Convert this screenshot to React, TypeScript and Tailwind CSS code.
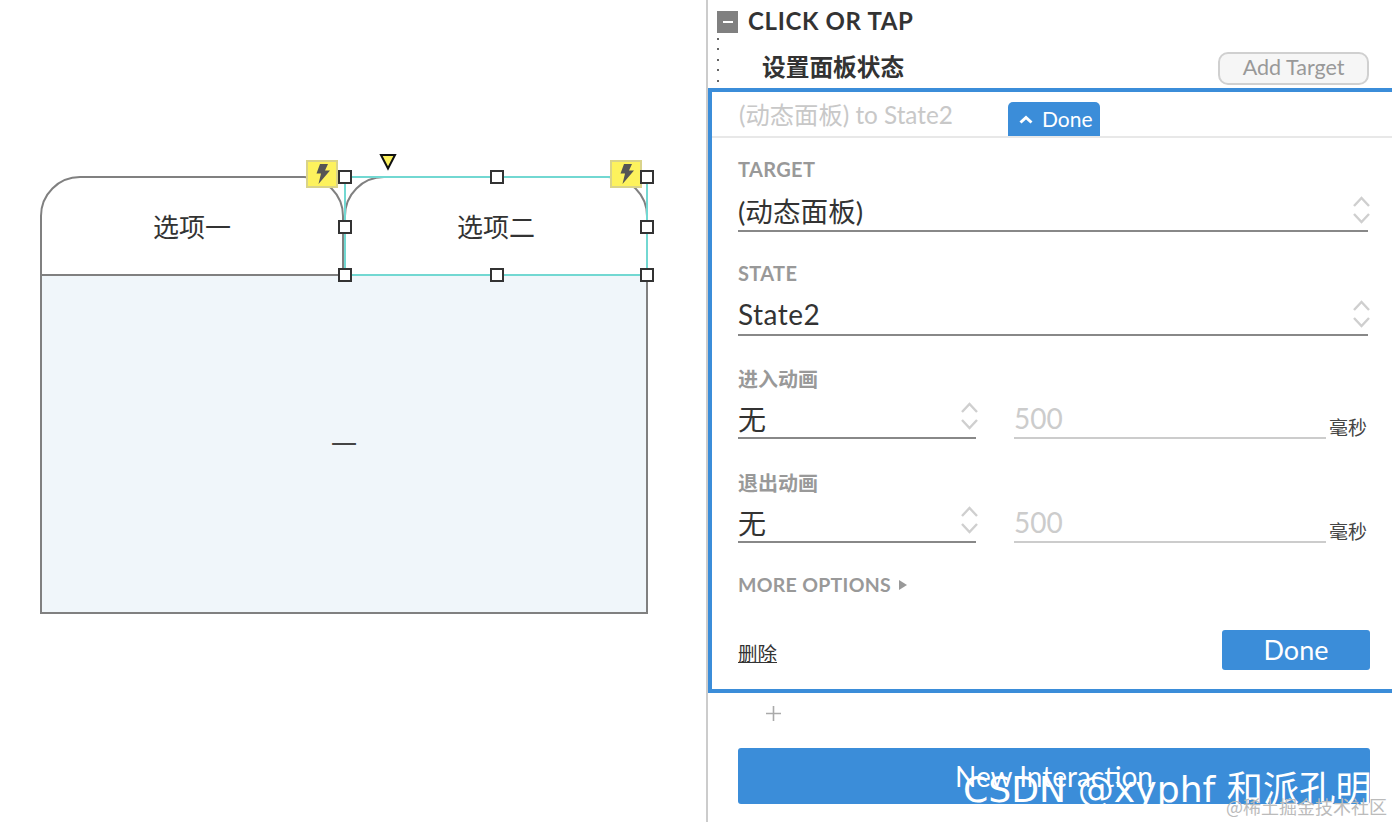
const FONT = "font-['Lato','Noto_Sans_CJK_SC',sans-serif]";

function Stepper() {
  return (
    <svg width="17" height="28" viewBox="0 0 17 28" fill="none" stroke="#cfcfcf" strokeWidth="2.4" className="block">
      <path d="M1 10 L8.5 2 L16 10" />
      <path d="M1 18 L8.5 26 L16 18" />
    </svg>
  );
}

function Bolt({ x }: { x: number }) {
  return (
    <div
      className="absolute top-[160px] flex h-[28px] w-[32px] items-center justify-center border-2 border-[#d9d38a] bg-[#fdf25d]"
      style={{ left: x }}
    >
      <svg width="15" height="20" viewBox="0 0 15 20" fill="#555555">
        <path d="M5 0 H13 L10 6.5 H15 L3.5 20 L6 9.5 H1.5 Z" />
      </svg>
    </div>
  );
}

function Handle({ x, y }: { x: number; y: number }) {
  return (
    <div
      className="absolute h-[14px] w-[14px] border-2 border-[#333333] bg-white"
      style={{ left: x - 7, top: y - 7 }}
    />
  );
}

function Field({ label, value, labelTop, valueClass }: { label: string; value: string; labelTop: number; valueClass: string }) {
  return (
    <div className="flex w-[630px] flex-col" style={{ marginTop: labelTop }}>
      <div className="h-[24px] text-[20px] leading-[24px] font-bold tracking-[0.35px] text-[#999999]">{label}</div>
      <div className="mt-[6px] flex h-[45px] items-end justify-between border-b-2 border-[#888888]">
        <span className={valueClass}>{value}</span>
        <span className="mr-[-2px] mb-[6px]">
          <Stepper />
        </span>
      </div>
    </div>
  );
}

function AnimRow({ label, top }: { label: string; top: number }) {
  return (
    <div className="flex flex-col" style={{ marginTop: top }}>
      <div className="h-[24px] text-[20px] leading-[24px] font-bold text-[#999999]">{label}</div>
      <div className="mt-[4px] flex items-end">
        <div className="flex h-[44px] w-[238px] items-end justify-between border-b-2 border-[#888888]">
          <span className="pb-[2px] text-[28px] leading-[32px] text-[#333333]">无</span>
          <span className="mr-[-2px] mb-[7px]">
            <Stepper />
          </span>
        </div>
        <div className="ml-[38px] flex h-[44px] w-[312px] items-end border-b-2 border-[#cccccc] pb-[4px]">
          <span className="text-[28px] leading-[30px] text-[#cccccc]">500</span>
        </div>
        <span className="mb-[-1px] ml-[3px] text-[19px] leading-[24px] text-[#444444]">毫秒</span>
      </div>
    </div>
  );
}

export default function App() {
  return (
    <div className={`relative flex h-[822px] w-[1392px] overflow-hidden bg-white ${FONT}`}>
      {/* canvas */}
      <div className="relative h-[822px] w-[706px] shrink-0">
        <div className="absolute top-[274px] left-[40px] h-[340px] w-[608px] border-2 border-[#808080] bg-[#f0f6fa]" />
        <div className="absolute top-[176px] left-[40px] flex h-[100px] w-[304px] items-center justify-center rounded-t-[40px] border-2 border-[#808080] bg-white pt-[2px] text-[26px] text-[#333333]">
          选项一
        </div>
        <div className="absolute top-[176px] left-[344px] flex h-[100px] w-[304px] items-center justify-center rounded-t-[40px] border-2 border-[#808080] bg-white pt-[2px] text-[26px] text-[#333333]">
          选项二
        </div>
        <div className="absolute top-[176px] left-[344px] h-[100px] w-[304px] border-2 border-[#72d8d2]" />
        <div className="absolute top-[426px] left-[331px] text-[26px] leading-[36px] text-[#444444]">一</div>
        <Bolt x={306} />
        <Bolt x={610} />
        <svg width="18" height="18" viewBox="0 0 18 18" className="absolute top-[153px] left-[379px]">
          <path d="M2 2 H16 L9 15.5 Z" fill="#fdf25d" stroke="#111111" strokeWidth="2" />
        </svg>
        <Handle x={345} y={177} />
        <Handle x={497} y={177} />
        <Handle x={647} y={177} />
        <Handle x={345} y={227} />
        <Handle x={647} y={227} />
        <Handle x={345} y={275} />
        <Handle x={497} y={275} />
        <Handle x={647} y={275} />
      </div>

      {/* panel */}
      <div className="flex h-[822px] w-[686px] flex-col border-l-2 border-[#cccccc]">
        <div className="flex h-[88px] flex-col">
          <div className="mt-[10px] flex h-[24px] items-center pl-[9px]">
            <div className="flex h-[22px] w-[21px] items-center justify-center bg-[#808080]">
              <div className="h-[2px] w-[10px] bg-white" />
            </div>
            <span className="ml-[10px] pb-[2px] text-[24px] leading-[24px] font-bold tracking-[0.65px] text-[#333333]">CLICK OR TAP</span>
          </div>
          <div className="flex flex-1 items-start">
            <div className="mt-[4px] ml-[9px] flex w-[2px] flex-col gap-[8.4px]">
              {[0, 1, 2, 3, 4, 5].map((i) => (
                <div key={i} className="h-[2px] w-[2px] bg-[#666666]" />
              ))}
            </div>
            <span className="mt-[18px] ml-[43px] text-[23.7px] leading-[30px] font-bold text-[#333333]">设置面板状态</span>
            <div className="mt-[18px] ml-[314px] flex h-[33px] w-[151px] items-center justify-center rounded-[10px] border-2 border-[#d0d0d0] bg-[#f6f6f6] pb-[3px] text-[21.5px] text-[#999999]">
              Add Target
            </div>
          </div>
        </div>

        <div className="flex h-[605px] flex-col border-y-4 border-l-4 border-[#3b8dd9]">
          <div className="flex h-[46px] items-end border-b-2 border-[#e8e8e8] pl-[27px]">
            <span className="mb-[5px] w-[269px] text-[24.3px] leading-[32px] text-[#c8c8c8]">(动态面板) to State2</span>
            <div className="flex h-[34px] w-[92px] items-center rounded-t-[5px] bg-[#3b8dd9] pl-[11px] text-[21px] text-white">
              <svg width="14" height="9" viewBox="0 0 14 9" fill="none" stroke="#ffffff" strokeWidth="3" className="mr-[9px]">
                <path d="M1.5 7.5 L7 2.5 L12.5 7.5" />
              </svg>
              Done
            </div>
          </div>
          <div className="flex flex-1 flex-col pl-[26px]">
            <Field label="TARGET" value="(动态面板)" labelTop={19} valueClass="pb-[1px] text-[27.6px] leading-[34px] text-[#333333]" />
            <Field label="STATE" value="State2" labelTop={29} valueClass="pb-[3px] text-[28px] leading-[34px] tracking-[0.5px] text-[#333333]" />
            <AnimRow label="进入动画" top={31} />
            <AnimRow label="退出动画" top={32} />
            <div className="mt-[30px] flex h-[24px] items-center text-[19.5px] font-bold tracking-[0.3px] text-[#999999]">
              MORE OPTIONS
              <span className="ml-[8px] h-0 w-0 border-y-[5px] border-l-[8px] border-y-transparent border-l-[#999999]" />
            </div>
            <div className="mt-[33px] flex w-[632px] items-center justify-between">
              <span className="pt-[7px] text-[19.5px] leading-[26px] text-[#333333] underline">删除</span>
              <div className="flex h-[40px] w-[148px] items-center justify-center rounded-[3px] bg-[#3b8dd9] text-[27px] text-white">
                Done
              </div>
            </div>
          </div>
        </div>

        <div className="mt-[11px] ml-[57px] flex h-[18px] w-[16px] items-center justify-center">
          <svg width="15" height="15" viewBox="0 0 15 15" stroke="#aaaaaa" strokeWidth="1.6">
            <path d="M7.5 0 V15 M0 7.5 H15" />
          </svg>
        </div>
        <div className="mt-[26px] ml-[30px] flex h-[56px] w-[632px] items-start justify-center rounded-[3px] bg-[#3b8dd9] pt-[10px] text-[28px] leading-[36px] text-white">
          New Interaction
        </div>
      </div>

      {/* watermark */}
      <div className="absolute top-[767px] left-[963px] font-['DejaVu_Sans','Noto_Sans_CJK_SC',sans-serif] text-[36.2px] leading-[46px] whitespace-nowrap text-white">
        CSDN @xyphf 和派孔明
      </div>
      <div className="absolute top-[794px] left-[1226px] font-['Noto_Sans_CJK_SC',sans-serif] text-[18px] leading-[24px] whitespace-nowrap text-[#bbbbbb]">
        @稀土掘金技术社区
      </div>
    </div>
  );
}
